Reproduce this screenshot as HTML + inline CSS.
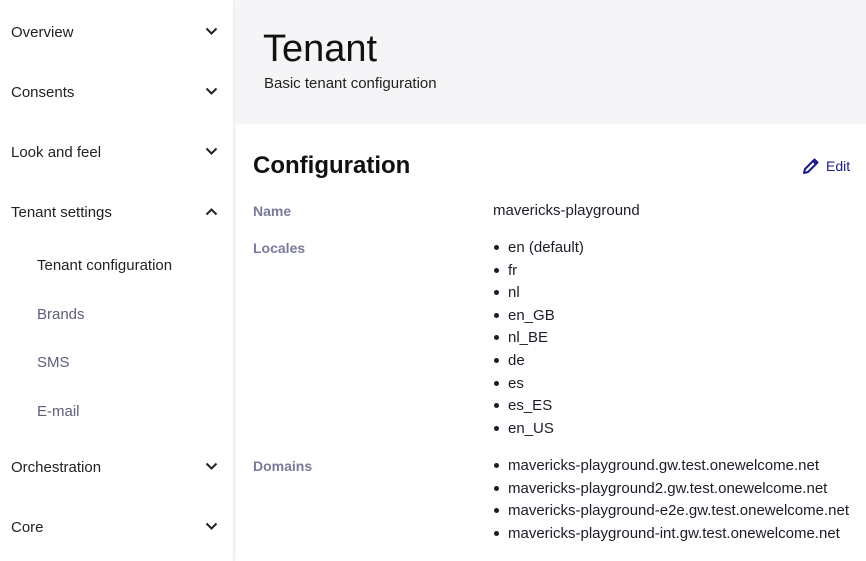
<!DOCTYPE html>
<html><head><style>
*{margin:0;padding:0;box-sizing:border-box}
body{width:866px;height:561px;overflow:hidden;font-family:"Liberation Sans",sans-serif;background:#fff;position:relative;color:#1c1c28}
.side{position:absolute;left:0;top:0;width:234px;height:561px;background:#fff;box-shadow:1px 0 3px rgba(0,0,0,0.08);border-right:1px solid #eee}
.it{position:absolute;left:11px;font-size:15px;color:#222;line-height:18px}
.chev{position:absolute;left:205px;width:13px;height:9px}
.sub{position:absolute;left:37px;font-size:15px;color:#5c5e7a;line-height:18px}
.hdr{position:absolute;left:235px;top:0;width:631px;height:124px;background:#f5f5f7}
.t{position:absolute;font-size:15px;line-height:18px}
.lbl{position:absolute;left:253px;font-size:14px;font-weight:bold;color:#777a99;line-height:18px}
ul{position:absolute;left:493px;list-style:none;font-size:15px;color:#1c1c28}
li{height:22.6px;line-height:18px;position:relative;padding-left:15px}
li:before{content:"";position:absolute;left:1px;top:6px;width:5px;height:5px;border-radius:50%;background:#1c1c28}
</style></head><body>
<div class="side">
<div class="it" style="top:24px">Overview</div>
<div class="it" style="top:84px">Consents</div>
<div class="it" style="top:144px">Look and feel</div>
<div class="it" style="top:204px">Tenant settings</div>
<div class="sub" style="top:257px;color:#222">Tenant configuration</div>
<div class="sub" style="top:306px">Brands</div>
<div class="sub" style="top:354px">SMS</div>
<div class="sub" style="top:403px">E-mail</div>
<div class="it" style="top:459px">Orchestration</div>
<div class="it" style="top:519px">Core</div>
<svg class="chev" style="top:27px" viewBox="0 0 13 9"><path d="M1.5 1.5L6.5 6.5 11.5 1.5" fill="none" stroke="#222" stroke-width="2"/></svg>
<svg class="chev" style="top:87px" viewBox="0 0 13 9"><path d="M1.5 1.5L6.5 6.5 11.5 1.5" fill="none" stroke="#222" stroke-width="2"/></svg>
<svg class="chev" style="top:147px" viewBox="0 0 13 9"><path d="M1.5 1.5L6.5 6.5 11.5 1.5" fill="none" stroke="#222" stroke-width="2"/></svg>
<svg class="chev" style="top:207px" viewBox="0 0 13 9"><path d="M1.5 7.5L6.5 2.5 11.5 7.5" fill="none" stroke="#222" stroke-width="2"/></svg>
<svg class="chev" style="top:462px" viewBox="0 0 13 9"><path d="M1.5 1.5L6.5 6.5 11.5 1.5" fill="none" stroke="#222" stroke-width="2"/></svg>
<svg class="chev" style="top:522px" viewBox="0 0 13 9"><path d="M1.5 1.5L6.5 6.5 11.5 1.5" fill="none" stroke="#222" stroke-width="2"/></svg>
</div>
<div class="hdr"></div>
<div class="t" style="left:263px;top:28px;font-size:38px;line-height:42px;color:#111">Tenant</div>
<div class="t" style="left:264px;top:75px;color:#222">Basic tenant configuration</div>
<div class="t" style="left:253px;top:152px;font-size:24px;line-height:28px;font-weight:bold;color:#111">Configuration</div>
<svg style="position:absolute;left:802px;top:157px" width="18" height="18" viewBox="0 0 18 18"><path d="M2 16l1-4L12.5 2.5l3 3L6 15z M11 4l3 3" fill="none" stroke="#1a1a8a" stroke-width="2" stroke-linejoin="round"/></svg>
<div class="t" style="left:826px;top:157px;font-size:14px;color:#1a1a8a">Edit</div>
<div class="lbl" style="top:202px">Name</div>
<div class="t" style="left:493px;top:202px">mavericks-playground</div>
<div class="lbl" style="top:239px">Locales</div>
<ul style="top:239px"><li>en (default)</li><li>fr</li><li>nl</li><li>en_GB</li><li>nl_BE</li><li>de</li><li>es</li><li>es_ES</li><li>en_US</li></ul>
<div class="lbl" style="top:457px">Domains</div>
<ul style="top:457px"><li>mavericks-playground.gw.test.onewelcome.net</li><li>mavericks-playground2.gw.test.onewelcome.net</li><li>mavericks-playground-e2e.gw.test.onewelcome.net</li><li>mavericks-playground-int.gw.test.onewelcome.net</li></ul>
</body></html>
